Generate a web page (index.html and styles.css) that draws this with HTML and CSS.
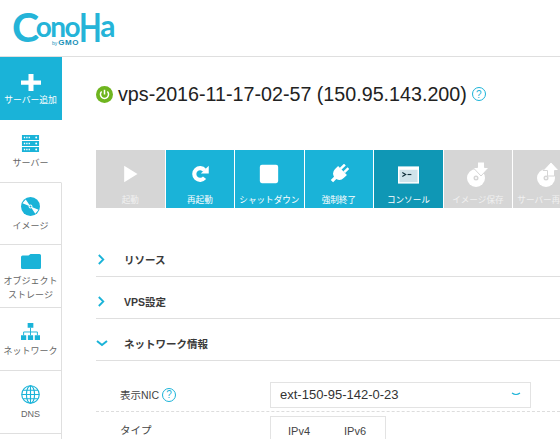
FILE: index.html
```html
<!DOCTYPE html>
<html lang="ja">
<head>
<meta charset="UTF-8">
<title>ConoHa</title>
<link rel="stylesheet" href="styles.css">
</head>
<body>

<header class="top">
  <div class="logo">
    <span class="logo-big">C</span>
    <div class="logo-mid">
      <span class="logo-small">ono</span>
      <span class="logo-by"><small>by</small>GMO</span>
    </div>
    <span class="logo-big logo-h">H</span>
    <span class="logo-a">a</span>
  </div>
</header>

<div class="layout">

  <!-- side menu -->
  <nav class="side">
    <a class="side-item side-item--add">
      <svg class="ic-plus" viewBox="0 0 20 20" preserveAspectRatio="none"><path d="M7.500 0h5v7.500H20v5h-7.500V20h-5v-7.500H0v-5h7.500z" fill="#fff"/></svg>
      <span>サーバー追加</span>
    </a>
    <a class="side-item side-item--current">
      <svg class="ic" viewBox="0 0 20 20">
        <path d="M1 1h18v5.400H1zM1 7.300h18v5.400H1zM1 13.600h18V19H1z" fill="#1ab3d8"/>
        <path d="M3 3h1.400v1.400H3zM5.500 3h1.400v1.400H5.500zM8 3h1.400v1.400H8zM3 9.300h1.400v1.400H3zM5.500 9.300h1.400v1.400H5.500zM8 9.300h1.400v1.400H8zM3 15.600h1.400V17H3zM5.500 15.600h1.400V17H5.500zM8 15.600h1.400V17H8z" fill="#fff"/>
        <circle cx="16" cy="3.700" r="1" fill="#fff"/><circle cx="16" cy="10" r="1" fill="#fff"/><circle cx="16" cy="16.300" r="1" fill="#fff"/>
      </svg>
      <span>サーバー</span>
    </a>
    <a class="side-item">
      <svg class="ic" viewBox="0 0 20 20">
        <circle cx="10" cy="10" r="10" fill="#1ab3d8"/>
        <path d="M10 10L5 2.500 1.500 6.500zM10 10l5 7.500 3.500-4z" fill="#fff"/>
        <circle cx="10" cy="10" r="2" fill="#fff"/><circle cx="10" cy="10" r="1" fill="#1ab3d8"/>
      </svg>
      <span>イメージ</span>
    </a>
    <a class="side-item side-item--two">
      <svg class="ic-folder" viewBox="0 0 20 15"><path d="M0 3q0-1.500 1.500-1.500h6L9.500 0h9Q20 0 20 1.500v12q0 1.500-1.500 1.500h-17Q0 15 0 13.500z" fill="#1ab3d8"/></svg>
      <span>オブジェクト<br>ストレージ</span>
    </a>
    <a class="side-item">
      <svg class="ic" viewBox="0 0 20 20">
        <path d="M7 1h6v5H7zM0 14h5.500v5H0zM7.250 14h5.500v5h-5.500zM14.500 14H20v5h-5.500z" fill="#1ab3d8"/>
        <path d="M10 6v8M2.750 14v-3.500h14.500V14" fill="none" stroke="#1ab3d8"/>
      </svg>
      <span>ネットワーク</span>
    </a>
    <a class="side-item">
      <svg class="ic" viewBox="0 0 20 20" fill="none" stroke="#1ab3d8" stroke-width="1.200">
        <circle cx="10" cy="10" r="9.200"/><ellipse cx="10" cy="10" rx="4.300" ry="9.200"/>
        <path d="M10 .8v18.400M.8 10h18.400M2.200 5.500h15.600M2.200 14.500h15.600"/>
      </svg>
      <span>DNS</span>
    </a>
    <a class="side-item"></a>
  </nav>

  <main class="main">
    <h1 class="title">
      <svg class="ic-power" viewBox="0 0 18 18">
        <circle cx="9" cy="9" r="9" fill="#6fb51f"/>
        <path d="M6 5.800a4.300 4.300 0 1 0 6 0" fill="none" stroke="#fff" stroke-width="1.600"/>
        <path d="M9 4v5" stroke="#fff" stroke-width="1.600"/>
      </svg>
      <span>vps-2016-11-17-02-57 (150.95.143.200)</span>
      <span class="help">?</span>
    </h1>

    <div class="tools">
      <a class="tool tool--off">
        <svg viewBox="0 0 24 24"><path d="M5 2l16 10L5 22z" fill="#fff"/></svg>
        <span>起動</span>
      </a>
      <a class="tool">
        <svg viewBox="0 0 24 24"><path d="M17.500 16.500a7 7 0 1 1 0-9" fill="none" stroke="#fff" stroke-width="5"/><path d="M22.500 2v9.500H13z" fill="#fff"/></svg>
        <span>再起動</span>
      </a>
      <a class="tool">
        <svg viewBox="0 0 24 24"><rect x="1" y="1" width="22" height="22" rx="2.500" fill="#fff"/></svg>
        <span>シャットダウン</span>
      </a>
      <a class="tool">
        <svg viewBox="0 0 24 24"><g transform="rotate(45 12 12)"><path d="M7.500-1h3v7h-3zM13.500-1h3v7h-3zM4.500 6h15v5.500a7.500 7.500 0 0 1-5.500 7V24h-4v-5.500a7.500 7.500 0 0 1-5.500-7z" fill="#fff"/></g></svg>
        <span>強制終了</span>
      </a>
      <a class="tool tool--on">
        <svg class="ic-console" viewBox="0 0 22 18"><rect width="22" height="18" fill="#fff"/><rect x="1.500" y="3.500" width="19" height="13" fill="#cfe3ea"/><path d="M4.500 6.500l3.500 2-3.500 2" fill="none" stroke="#0f2f3a" stroke-width="1.200"/><path d="M10 8.500h4" stroke="#0f2f3a" stroke-width="1.200"/></svg>
        <span>コンソール</span>
      </a>
      <a class="tool tool--off">
        <svg class="ic-disc" viewBox="0 0 21 25"><circle cx="9" cy="16" r="9" fill="#fff"/><circle cx="9" cy="16" r="2.500" fill="#d6d6d6"/><circle cx="9" cy="16" r="1" fill="#fff"/><path d="M10.500 0h7v5.500H22l-8 8.500-8-8.500h4.500z" fill="#fff" stroke="#d6d6d6"/></svg>
        <span>イメージ保存</span>
      </a>
      <a class="tool tool--off">
        <svg class="ic-disc" viewBox="0 0 21 25"><circle cx="9" cy="16" r="9" fill="#fff"/><circle cx="9" cy="16" r="2.500" fill="#d6d6d6"/><circle cx="9" cy="16" r="1" fill="#fff"/><path d="M10.500 14h7V8.500H22L14 0 6 8.500h4.500z" fill="#fff" stroke="#d6d6d6"/></svg>
        <span>サーバー再起動</span>
      </a>
    </div>

    <section class="acc">
      <div class="acc-row">
        <svg class="chev" viewBox="0 0 10 12"><path d="M2 1l5 5-5 5" fill="none" stroke="#1ab3d8" stroke-width="2"/></svg>
        <span>リソース</span>
      </div>
      <div class="acc-row">
        <svg class="chev" viewBox="0 0 10 12"><path d="M2 1l5 5-5 5" fill="none" stroke="#1ab3d8" stroke-width="2"/></svg>
        <span>VPS設定</span>
      </div>
      <div class="acc-row">
        <svg class="chev chev--open" viewBox="0 0 12 7"><path d="M1 1l5 4 5-4" fill="none" stroke="#1ab3d8" stroke-width="2"/></svg>
        <span>ネットワーク情報</span>
      </div>
    </section>

    <div class="form-row form-row--nic">
      <div class="form-label">表示NIC <span class="help">?</span></div>
      <div class="select">
        <span>ext-150-95-142-0-23</span>
        <svg viewBox="0 0 10 5"><path d="M1 1q4 3 8 0" fill="none" stroke="#1ab3d8" stroke-width="1.200"/></svg>
      </div>
    </div>
    <div class="form-row form-row--type">
      <div class="form-label">タイプ</div>
      <div class="tabs"><span>IPv4</span><span>IPv6</span></div>
    </div>
  </main>

</div>

</body>
</html>
```

FILE: styles.css
```css
:root {
  --blue: #1ab3d8;
  --blue-dark: #0f97b5;
  --off: #d6d6d6;
  --line: #dfdfdf;
  --text: #333;
}
* { margin: 0; padding: 0; box-sizing: border-box; }
html, body { height: 439px; overflow: hidden; }
body {
  width: 560px;
  background: #fff;
  color: var(--text);
  font-family: "Liberation Sans", "Noto Sans CJK JP", sans-serif;
}

/* ---------- header ---------- */
.top {
  height: 57px;
  border-bottom: 1px solid var(--line);
  padding: 8px 0 0 12px;
}
.logo {
  display: flex;
  align-items: flex-start;
  height: 36px;
  color: #25b4d8;
  font-family: "Lato", sans-serif;
  font-weight: 700;
}
.logo-big { font-size: 41px; line-height: 38px; letter-spacing: -1px; }
.logo-mid { display: flex; flex-direction: column; align-items: flex-end; width: 41px; }
.logo-small { font-size: 28px; line-height: 25px; margin-top: 6px; letter-spacing: -1.500px; }
.logo-h { width: 21px; transform: scaleX(0.72); transform-origin: left; }
.logo-a { font-size: 30px; line-height: 28px; margin-top: 3px; letter-spacing: -1px; }
.logo-by {
  color: #1790b8;
  font-family: "Liberation Sans", sans-serif;
  font-size: 8px;
  line-height: 7px;
  letter-spacing: 0.600px;
}
.logo-by small { font-size: 5px; font-weight: 400; margin-right: 1px; letter-spacing: 0; }

/* ---------- layout ---------- */
.layout { display: flex; height: 382px; overflow: hidden; }
.side { width: 62px; flex: none; }
.side-item {
  display: flex;
  flex-direction: column;
  align-items: center;
  height: 62.750px;
  padding-top: 14px;
  border-right: 1px solid var(--line);
  border-bottom: 1px solid var(--line);
  font-size: 9px;
  line-height: 14px;
  color: #666;
  text-align: center;
  white-space: nowrap;
}
.side-item .ic { width: 19px; height: 19px; margin-bottom: 3px; flex: none; }
.side-item--add {
  background: var(--blue);
  border: 0;
  color: #fff;
  padding: 17px 1px 0 0;
  font-size: 8.800px;
}
.ic-plus { width: 20px; height: 17px; margin-bottom: 2px; flex: none; }
.side-item--current { border-right-color: transparent; }
.side-item--two { padding-top: 9px; }
.ic-folder { width: 20px; height: 15px; margin-bottom: 5px; flex: none; }

.main { flex: 1; min-width: 0; padding-left: 34px; overflow: hidden; }

/* ---------- title ---------- */
.title {
  display: flex;
  align-items: center;
  gap: 5px;
  height: 34px;
  margin-top: 20px;
  font-size: 19.700px;
  font-weight: 400;
  color: #222;
  white-space: nowrap;
}
.ic-power { width: 17px; height: 17px; flex: none; }
.help {
  display: inline-flex;
  align-items: center;
  justify-content: center;
  width: 14px;
  height: 14px;
  border: 1px solid var(--blue);
  border-radius: 50%;
  color: var(--blue);
  font-size: 10px;
  vertical-align: 1px;
}

/* ---------- toolbar ---------- */
.tools { display: flex; gap: 0.750px; margin-top: 39px; width: 500px; }
.tool {
  display: flex;
  flex-direction: column;
  align-items: center;
  width: 68.750px;
  flex: none;
  height: 58px;
  padding-top: 14px;
  background: var(--blue);
  color: #fff;
  font-size: 8.600px;
  line-height: 12px;
  white-space: nowrap;
  overflow: hidden;
}
.tool svg { width: 20px; height: 20px; margin-bottom: 10px; flex: none; }
.tool--off { background: var(--off); color: #f1f1f1; }
.tool--on { background: var(--blue-dark); }
.tool .ic-console { width: 21px; height: 18px; margin: 2px 0 10px; }
.tool .ic-disc { width: 21px; height: 25px; margin: -2px 0 7px; }

/* ---------- accordion ---------- */
.acc { margin-top: 27px; }
.acc-row {
  display: flex;
  align-items: center;
  height: 42px;
  padding-top: 7px;
  border-bottom: 1px solid var(--line);
  font-size: 10.500px;
  font-weight: 700;
  color: #3a3a3a;
}
.chev { width: 9px; height: 11px; margin-left: 1px; margin-right: 18px; }
.chev--open { width: 12px; height: 7px; margin-left: 0; margin-right: 16px; }

/* ---------- form ---------- */
.form-row { display: flex; padding-left: 24px; }
.form-row--nic {
  align-items: center;
  height: 51px;
  padding-top: 17px;
  border-bottom: 1px dashed #ddd;
}
.form-label { width: 150px; flex: none; font-size: 10.500px; color: #444; }
.select {
  display: flex;
  align-items: center;
  justify-content: space-between;
  width: 261px;
  height: 26px;
  padding: 0 9px;
  border: 1px solid #e3e3e3;
  font-size: 13px;
  color: #333;
}
.select svg { width: 10px; height: 5px; }
.form-row--type { padding-top: 4px; }
.form-row--type .form-label { padding-top: 6px; }
.tabs {
  display: flex;
  gap: 34px;
  width: 116px;
  height: 40px;
  padding: 8px 0 0 17px;
  border: 1px solid #e3e3e3;
  font-size: 11px;
  color: #444;
}
```
